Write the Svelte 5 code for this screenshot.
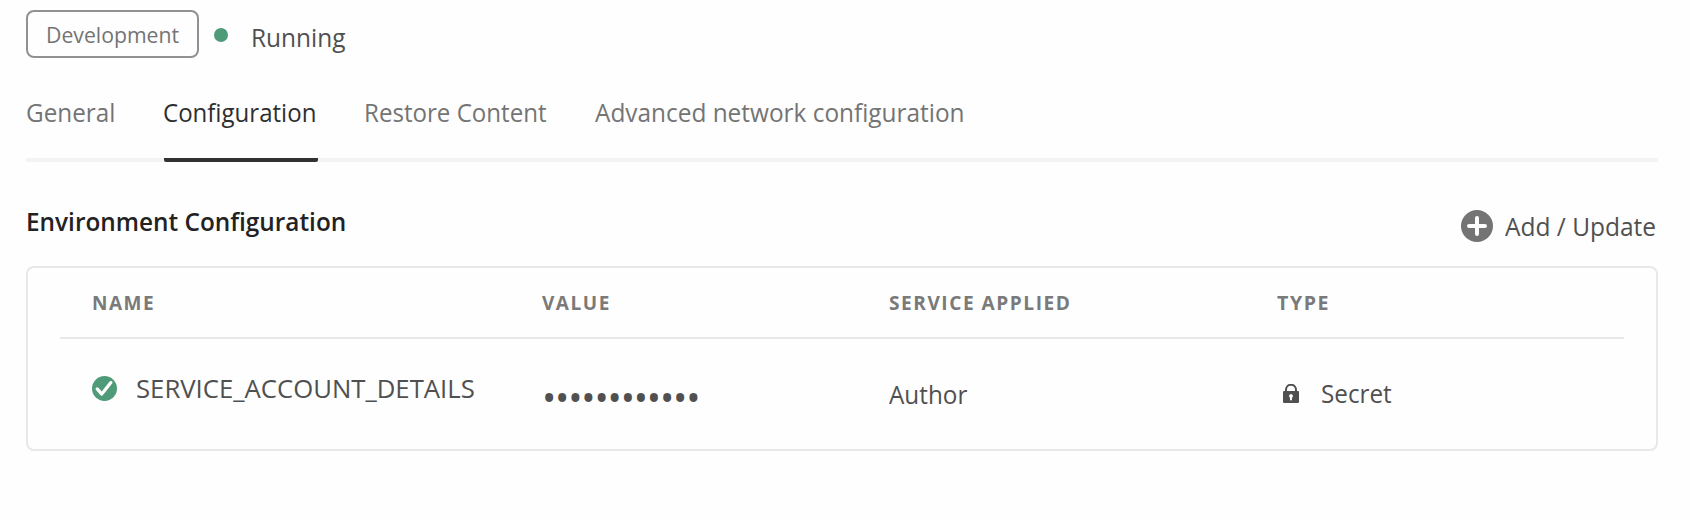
<script>
  const tabs = [
    { label: 'General', fit: 0.934 },
    { label: 'Configuration', fit: 0.925, active: true },
    { label: 'Restore Content', fit: 0.927 },
    { label: 'Advanced network configuration', fit: 0.938 },
  ];
  const columns = [
    { label: 'NAME', fit: 0.95 },
    { label: 'VALUE', fit: 0.95 },
    { label: 'SERVICE APPLIED', fit: 0.955 },
    { label: 'TYPE', fit: 0.98 },
  ];
  const rows = [
    { name: 'SERVICE_ACCOUNT_DETAILS', value: '••••••••••••', service: 'Author', type: 'Secret' },
  ];
</script>

<main>
  <header class="status">
    <span class="badge"><span class="fit">Development</span></span>
    <span class="dot"></span>
    <span class="state fit">Running</span>
  </header>

  <nav class="tabs">
    {#each tabs as tab}
      <a class="tab" class:active={tab.active}><span class="fit" style="--fit: {tab.fit}">{tab.label}</span></a>
    {/each}
  </nav>

  <div class="section-head">
    <h2 class="fit">Environment Configuration</h2>
    <button class="add">
      <svg width="32" height="32" viewBox="0 0 32 32">
        <circle cx="16" cy="16" r="16" fill="#747474" />
        <path d="M16 8v16M8 16h16" stroke="#fff" stroke-width="4" stroke-linecap="round" />
      </svg>
      <span class="add-label"><span class="fit">Add / Update</span></span>
    </button>
  </div>

  <section class="card">
    <div class="grid head">
      {#each columns as column}
        <span><span class="fit" style="--fit: {column.fit}">{column.label}</span></span>
      {/each}
    </div>
    {#each rows as row}
      <div class="grid row">
        <div class="name">
          <svg width="25" height="25" viewBox="0 0 25 25">
            <circle cx="12.5" cy="12.5" r="12.5" fill="#4f9a78" />
            <path d="M5.2 12.9l4.6 5.2L18.9 6.6" fill="none" stroke="#fff" stroke-width="3.2" stroke-linecap="round" stroke-linejoin="round" />
          </svg>
          <span class="fit">{row.name}</span>
        </div>
        <div class="value">{row.value}</div>
        <div class="service"><span class="fit">{row.service}</span></div>
        <div class="type">
          <svg width="16" height="19" viewBox="0 0 16 19">
            <path d="M3 8V5.7a5 5 0 0 1 10 0V8" fill="none" stroke="#505050" stroke-width="2" />
            <path fill-rule="evenodd" fill="#505050" d="M1 7h14a1 1 0 0 1 1 1v10a1 1 0 0 1-1 1H1a1 1 0 0 1-1-1V8a1 1 0 0 1 1-1zM8 10a2 2 0 0 0-1 3.7V15.4a1 1 0 0 0 2 0V13.7A2 2 0 0 0 8 10z" />
          </svg>
          <span class="fit">{row.type}</span>
        </div>
      </div>
    {/each}
  </section>
</main>

<style>
  :global(body) {
    background: #fefefe;
  }
  main {
    box-sizing: border-box;
    width: 1690px;
    height: 520px;
    padding: 10px 32px 0 26px;
    font: 400 26px/32px "Open Sans", sans-serif;
    color: #505050;
    white-space: nowrap;
  }
  .fit {
    display: inline-block;
    transform: scaleX(var(--fit, 1));
    transform-origin: left;
  }
  .status {
    display: flex;
    align-items: center;
    height: 48px;
  }
  .badge {
    --fit: 0.965;
    box-sizing: border-box;
    width: 173px;
    height: 48px;
    padding: 7px 0 0 18px;
    border: 2px solid #919191;
    border-radius: 8px;
    font-size: 22px;
    line-height: 30px;
    color: #747474;
  }
  .dot {
    width: 14px;
    height: 14px;
    margin: 2px 23px 0 15px;
    border-radius: 50%;
    background: #4f9a78;
  }
  .state {
    --fit: 0.94;
    padding-top: 6px;
  }
  .tabs {
    display: grid;
    grid-template-columns: 138px 200px 231px auto;
    height: 62px;
    padding-top: 38px;
    border-bottom: 4px solid #f3f3f3;
    margin-bottom: 42px;
    color: #747474;
  }
  .tab {
    height: 62px;
  }
  .active {
    height: 66px;
    width: 154px;
    color: #2f2f2f;
    background: linear-gradient(#323232, #323232) bottom / 100% 4px no-repeat;
    border-radius: 2px;
  }
  .active .fit {
    margin-left: -1px;
  }
  .section-head {
    display: flex;
    justify-content: space-between;
    height: 62px;
  }
  h2 {
    --fit: 0.937;
    height: 32px;
    margin: 1px 0 0;
    font-size: 26px;
    line-height: 32px;
    font-weight: 600;
    color: #222;
  }
  .add {
    --fit: 0.942;
    display: flex;
    gap: 12px;
    height: 32px;
    margin: 6px 2px 0 0;
    padding: 0;
    border: 0;
    background: none;
    font: inherit;
    color: #505050;
  }
  .add-label {
    width: 151px;
    text-align: left;
  }
  .card {
    box-sizing: border-box;
    height: 185px;
    border: 2px solid #e8e8e8;
    border-radius: 8px;
    padding: 0 32px;
  }
  .grid {
    display: grid;
    grid-template-columns: 450px 347px 388px auto;
    padding-left: 32px;
  }
  .head {
    height: 69px;
    border-bottom: 2px solid #e8e8e8;
    font-size: 20px;
    font-weight: 700;
    line-height: 69px;
    letter-spacing: 1.6px;
    color: #7a7a7a;
  }
  .name {
    --fit: 0.989;
    display: flex;
    gap: 19px;
    padding-top: 33px;
  }
  .name svg {
    margin-top: 3.5px;
  }
  .value {
    padding-top: 42px;
    font-size: 38px;
    letter-spacing: -1.18px;
  }
  .service {
    --fit: 0.934;
    padding-top: 39px;
  }
  .type {
    --fit: 0.933;
    display: flex;
    gap: 22px;
    padding: 38px 0 0 6px;
  }
  .type svg {
    margin-top: 7px;
  }
</style>
